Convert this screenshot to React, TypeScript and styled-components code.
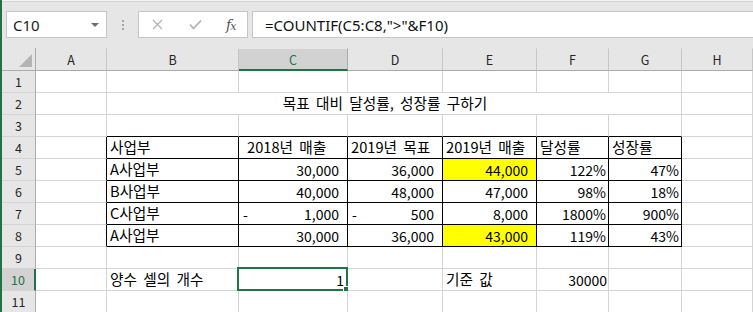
import styled, { createGlobalStyle } from "styled-components";

const GlobalStyle = createGlobalStyle`
  html, body {
    margin: 0;
    padding: 0;
    background: #fff;
    overflow: hidden;
  }
`;

type CellSpec = {
  v?: string;
  align?: "left" | "right" | "center";
  fill?: string;
  dash?: boolean;
  pl?: number;
  pr?: number;
  span?: number;
  ko?: boolean;
};

const COLS = ["A", "B", "C", "D", "E", "F", "G", "H"];
const WIDTHS = [71, 132, 109, 95, 94, 72, 73, 71];
const ROWS = 11;

const YELLOW = "#ffff00";

const num = (v: string, extra: Partial<CellSpec> = {}): CellSpec => ({ v, align: "right", pr: 8, ...extra });
const pct = (v: string): CellSpec => ({ v, align: "right", pr: 2 });
const txt = (v: string, pl = 3): CellSpec => ({ v, align: "left", pl, ko: true });

const cells: Record<string, CellSpec> = {
  B2: { v: "목표 대비 달성률, 성장률 구하기", span: 6, align: "center", pr: 18, ko: true },
  B4: txt("사업부"),
  C4: txt("2018년 매출", 8),
  D4: txt("2019년 목표"),
  E4: txt("2019년 매출"),
  F4: txt("달성률"),
  G4: txt("성장률"),
  B5: txt("A사업부"),
  C5: num("30,000"),
  D5: num("36,000"),
  E5: num("44,000", { fill: YELLOW }),
  F5: pct("122%"),
  G5: pct("47%"),
  B6: txt("B사업부"),
  C6: num("40,000"),
  D6: num("48,000"),
  E6: num("47,000"),
  F6: pct("98%"),
  G6: pct("18%"),
  B7: txt("C사업부"),
  C7: num("1,000", { dash: true }),
  D7: num("500", { dash: true }),
  E7: num("8,000"),
  F7: pct("1800%"),
  G7: pct("900%"),
  B8: txt("A사업부"),
  C8: num("30,000"),
  D8: num("36,000"),
  E8: num("43,000", { fill: YELLOW }),
  F8: pct("119%"),
  G8: pct("43%"),
  B10: txt("양수 셀의 개수"),
  C10: { v: "1", align: "right", pr: 3 },
  E10: txt("기준 값"),
  F10: { v: "30000", align: "right", pr: 1 },
};

// merged B2:G2 hides these
const hidden = new Set(["C2", "D2", "E2", "F2", "G2"]);

const inTable = (r: number, c: number) => r >= 4 && r <= 8 && c >= 1 && c <= 6;

const ACTIVE_COL = 2;
const ACTIVE_ROW = 10;

const Window = styled.div`
  height: 312px;
  border-left: 2px solid #217346;
  display: flex;
  flex-direction: column;
  overflow: hidden;
  font-family: "Noto Sans CJK KR", "Noto Sans", sans-serif;
`;

const FormulaBar = styled.div`
  height: 48px;
  flex: none;
  box-sizing: border-box;
  padding: 11px 0 10px 4px;
  background: linear-gradient(#f3f3f3 0 1px, #d4d4d4 1px 2px, #e6e6e6 2px);
  display: flex;
  align-items: stretch;
`;

const NameBox = styled.div`
  width: 101px;
  box-sizing: border-box;
  background: #fff;
  border: 1px solid #c6c6c6;
  display: flex;
  align-items: center;
  justify-content: space-between;
  padding: 0 7px 0 6px;
  font-family: "Noto Sans", sans-serif;
  font-size: 15px;
  color: #222;
`;

const Caret = styled.span`
  width: 0;
  height: 0;
  border-left: 4px solid transparent;
  border-right: 4px solid transparent;
  border-top: 4px solid #6d6d6d;
`;

const Grip = styled.div`
  width: 31px;
  display: flex;
  flex-direction: column;
  align-items: center;
  justify-content: center;
  gap: 2px;

  span {
    width: 2px;
    height: 2px;
    background: #a6a6a6;
  }
`;

const FxBox = styled.div`
  width: 110px;
  box-sizing: border-box;
  background: #fff;
  border: 1px solid #c6c6c6;
  display: flex;
  align-items: center;
  padding-left: 13px;
`;

const IconSlot = styled.span`
  width: 37px;
  display: flex;
  align-items: center;
  justify-content: flex-start;
`;

const Fx = styled.span`
  font-family: "DejaVu Serif", serif;
  font-style: italic;
  font-size: 14px;
  color: #555;
  letter-spacing: -1px;

  small {
    font-size: 11px;
  }
`;

const FormulaBox = styled.div`
  flex: 1;
  margin-left: 4px;
  background: #fff;
  border: 1px solid #c6c6c6;
  border-right: none;
  display: flex;
  align-items: center;
  padding-left: 12px;
  font-family: "Noto Sans", sans-serif;
  font-size: 15px;
  color: #111;
  white-space: pre;
`;

const Sheet = styled.div`
  display: grid;
  grid-template-columns: 34px ${WIDTHS.map((w) => `${w}px`).join(" ")};
  grid-template-rows: 23px repeat(${ROWS}, 22px);
`;

const Corner = styled.div`
  background: #e6e6e6;
  border-right: 1px solid #ababab;
  border-bottom: 1px solid #ababab;
  box-sizing: border-box;
  position: relative;

  &::after {
    content: "";
    position: absolute;
    right: 3px;
    bottom: 3px;
    width: 0;
    height: 0;
    border-left: 13px solid transparent;
    border-bottom: 13px solid #b4b4b4;
  }
`;

const ColHeader = styled.div<{ $active?: boolean }>`
  box-sizing: border-box;
  background: ${(p) => (p.$active ? "#d2d2d2" : "#e6e6e6")};
  border-top: 1px solid #e6e6e6;
  border-right: 1px solid ${(p) => (p.$active ? "#ababab" : "#c6c6c6")};
  border-bottom: ${(p) => (p.$active ? "2px solid #217346" : "1px solid #ababab")};
  display: flex;
  align-items: center;
  justify-content: center;
  font-size: 12.5px;
  color: ${(p) => (p.$active ? "#217346" : "#262626")};
`;

const RowHeader = styled.div<{ $active?: boolean }>`
  box-sizing: border-box;
  background: ${(p) => (p.$active ? "#d2d2d2" : "#e6e6e6")};
  border-right: ${(p) => (p.$active ? "2px solid #217346" : "1px solid #ababab")};
  border-bottom: 1px solid #d4d4d4;
  display: flex;
  align-items: center;
  justify-content: center;
  font-size: 12.5px;
  color: ${(p) => (p.$active ? "#217346" : "#262626")};
`;

const Cell = styled.div<{
  $align: "left" | "right" | "center";
  $fill?: string;
  $right: string;
  $bottom: string;
  $pl: number;
  $pr: number;
  $span: number;
  $ko?: boolean;
}>`
  grid-column: span ${(p) => p.$span};
  position: relative;
  box-sizing: border-box;
  background: ${(p) => p.$fill || "#fff"};
  border-right: 1px solid ${(p) => p.$right};
  border-bottom: 1px solid ${(p) => p.$bottom};
  padding: 0 ${(p) => p.$pr}px 0 ${(p) => p.$pl}px;
  display: flex;
  align-items: center;
  justify-content: ${(p) => (p.$align === "left" ? "flex-start" : p.$align === "right" ? "flex-end" : "center")};
  font-size: ${(p) => (p.$ko ? "14.67px" : "14px")};
  word-spacing: ${(p) => (p.$ko ? "3px" : "0")};
  line-height: 1;
  color: #000;
  white-space: nowrap;
`;

const Dash = styled.span`
  margin-right: auto;
`;

const ActiveFrame = styled.div`
  position: absolute;
  top: -2px;
  left: -2px;
  right: -1px;
  bottom: -1px;
  border: 2px solid #217346;
  pointer-events: none;

  &::after {
    content: "";
    position: absolute;
    right: -4px;
    bottom: -4px;
    width: 5px;
    height: 5px;
    background: #217346;
    border: 1px solid #fff;
  }
`;

const GRID = "#d4d4d4";
const BLACK = "#000";

export default function App() {
  const body: JSX.Element[] = [];

  for (let r = 1; r <= ROWS; r++) {
    body.push(
      <RowHeader key={`h${r}`} $active={r === ACTIVE_ROW}>
        {r}
      </RowHeader>
    );
    COLS.forEach((col, c) => {
      const id = `${col}${r}`;
      if (hidden.has(id)) return;
      const spec = cells[id] || {};
      const span = spec.span || 1;
      const lastC = c + span - 1;
      const right = inTable(r, lastC) || inTable(r, lastC + 1) ? BLACK : GRID;
      const bottom = inTable(r, c) || inTable(r + 1, c) ? BLACK : GRID;
      body.push(
        <Cell
          key={id}
          $align={spec.align || "center"}
          $fill={spec.fill}
          $right={right}
          $bottom={bottom}
          $pl={spec.dash ? 4 : spec.pl || 0}
          $pr={spec.pr || 0}
          $span={span}
          $ko={spec.ko}
        >
          {spec.dash && <Dash>-</Dash>}
          {spec.v}
          {r === ACTIVE_ROW && c === ACTIVE_COL && <ActiveFrame />}
        </Cell>
      );
    });
  }

  return (
    <>
      <GlobalStyle />
      <Window>
        <FormulaBar>
          <NameBox>
            C10
            <Caret />
          </NameBox>
          <Grip>
            <span />
            <span />
            <span />
          </Grip>
          <FxBox>
            <IconSlot>
              <svg width="11" height="11" viewBox="0 0 11 11">
                <path d="M1 1 L10 10 M10 1 L1 10" stroke="#b3b3b3" strokeWidth="1.3" fill="none" />
              </svg>
            </IconSlot>
            <IconSlot>
              <svg width="13" height="11" viewBox="0 0 13 11">
                <path d="M1 5.5 L4.5 9.5 L12 1.5" stroke="#b3b3b3" strokeWidth="1.8" fill="none" />
              </svg>
            </IconSlot>
            <Fx>
              f<small>x</small>
            </Fx>
          </FxBox>
          <FormulaBox>{'=COUNTIF(C5:C8,">"&F10)'}</FormulaBox>
        </FormulaBar>
        <Sheet>
          <Corner />
          {COLS.map((col, c) => (
            <ColHeader key={col} $active={c === ACTIVE_COL}>
              {col}
            </ColHeader>
          ))}
          {body}
        </Sheet>
      </Window>
    </>
  );
}
